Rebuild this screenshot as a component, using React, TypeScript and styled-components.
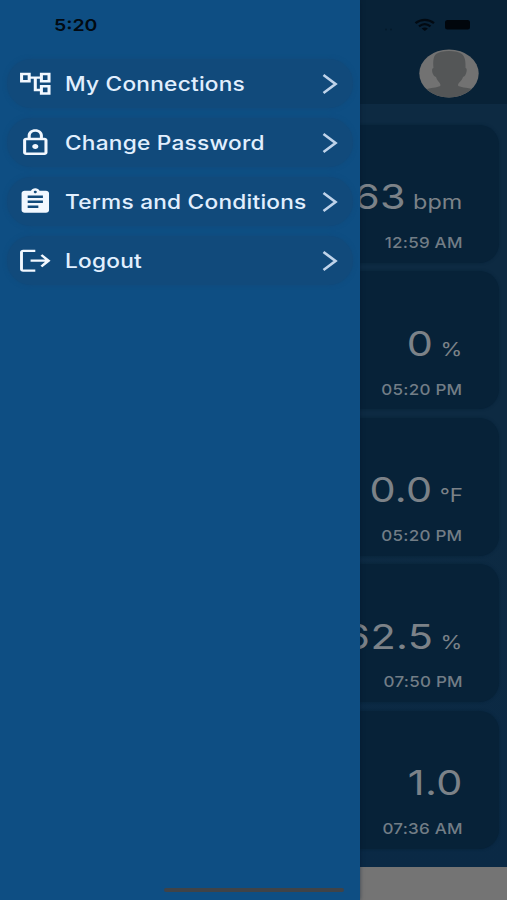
import React from "react";
import styled, { createGlobalStyle } from "styled-components";

const GlobalStyle = createGlobalStyle`
  body { margin: 0; background: #0c2a43; }
  * { box-sizing: border-box; }
`;

const Screen = styled.div`
  position: relative;
  width: 507px;
  height: 900px;
  overflow: hidden;
  font-family: Inter, "Liberation Sans", sans-serif;
`;

const Dashboard = styled.main`
  display: flex;
  flex-direction: column;
  height: 900px;
  background: linear-gradient(#0d2a42 0, #0d2a42 520px, #0a2945 867px);
`;

const Header = styled.header`
  display: flex;
  justify-content: flex-end;
  height: 104px;
  padding: 49px 28px 0 0;
  background: #082237;
`;

const Avatar = styled.svg`
  width: 60px;
  height: 49px;
`;

const CardList = styled.section`
  flex: 1;
  display: flex;
  flex-direction: column;
  gap: 8.4px;
  padding: 21px 8px 0;
`;

const Card = styled.article`
  display: flex;
  flex-direction: column;
  align-items: flex-end;
  height: 138px;
  padding: 48.4px 36.5px 0 0;
  border-radius: 20px;
  background: #072238;
  box-shadow: 0 0 3px #072238;
`;

const Reading = styled.div`
  display: flex;
  align-items: baseline;
  height: 48px;
  line-height: 48px;
  color: #7c8288;
  white-space: nowrap;
  transform: scaleX(1.2);
  transform-origin: right;
`;

const Value = styled.span`
  font-size: 34.5px;
  letter-spacing: 0.3px;
`;

const Unit = styled.span<{ $size: number }>`
  margin-left: 6px;
  font-size: ${(p) => p.$size}px;
  letter-spacing: 0;
`;

const Time = styled.time`
  margin-top: 11.8px;
  font-size: 15px;
  font-weight: 450;
  line-height: 20px;
  letter-spacing: 0.2px;
  color: #727d86;
  white-space: nowrap;
  transform: scaleX(1.135);
  transform-origin: right;
`;

const BottomBar = styled.footer`
  height: 33px;
  background: #747474;
`;

const Drawer = styled.aside`
  position: absolute;
  top: 0;
  left: 0;
  width: 360px;
  height: 900px;
  padding: 59px 7px 0;
  background: #0e4e83;
  box-shadow: 0 0 4px rgba(0, 20, 40, 0.55);
`;

const Menu = styled.nav`
  display: flex;
  flex-direction: column;
  gap: 10px;
`;

const MenuRow = styled.a`
  display: flex;
  align-items: center;
  height: 49px;
  padding: 0 15px 0 10px;
  border-radius: 24px;
  background: #114a7b;
  box-shadow: 0 0 4px #114a7b;
`;

const Icon = styled.svg`
  flex: none;
  width: 36.6px;
  height: 29.5px;
  fill: #f2f8ff;
`;

const Label = styled.span`
  flex: 1;
  margin-left: 11.4px;
  font-size: 19.5px;
  font-weight: 450;
  line-height: 26px;
  letter-spacing: 0.2px;
  color: #e1effe;
  white-space: nowrap;
  transform: scaleX(1.162);
  transform-origin: left;
`;

const Chevron = styled.svg`
  flex: none;
  width: 16px;
  height: 22px;
  fill: none;
  stroke: #bfd3ea;
  stroke-width: 2.7;
`;

const StatusBar = styled.div`
  position: absolute;
  top: 14px;
  left: 0;
  display: flex;
  align-items: center;
  justify-content: space-between;
  width: 507px;
  height: 21px;
  padding: 0 36px 0 54px;
  color: #020a12;
`;

const Clock = styled.span`
  font-size: 16.5px;
  font-weight: 600;
  transform: scaleX(1.18);
  transform-origin: left;
`;

const StatusIcons = styled.svg`
  width: 88px;
  height: 16px;
`;

const HomeIndicator = styled.div`
  position: absolute;
  left: 164px;
  top: 888px;
  width: 180px;
  height: 4px;
  border-radius: 2px;
  background: #404347;
`;

const icons = {
  tree: (
    <path d="M22 11V3h-7v3H9V3H2v8h7V8h2v10h4v3h7v-8h-7v3h-2V8h2v3h7zM7 9H4V5h3v4zm10 6h3v4h-3v-4zm0-10h3v4h-3V5z" />
  ),
  lock: (
    <path
      fillRule="evenodd"
      d="M18 8h-1V6c0-2.76-2.24-5-5-5S7 3.24 7 6v2H6c-1.1 0-2 .9-2 2v10c0 1.1.9 2 2 2h12c1.100 0 2-.9 2-2V10c0-1.100-.9-2-2-2zM9 6c0-1.660 1.340-3 3-3s3 1.340 3 3v2H9V6zm9 14H6V10h12v10zm-6-3c1.100 0 2-.9 2-2s-.9-2-2-2-2 .9-2 2 .9 2 2 2z"
    />
  ),
  terms: (
    <path d="M19 3h-4.180C14.400 1.840 13.300 1 12 1c-1.300 0-2.400.84-2.820 2H5c-1.100 0-2 .9-2 2v14c0 1.100.9 2 2 2h14c1.100 0 2-.9 2-2V5c0-1.100-.9-2-2-2zm-7 0c.55 0 1 .45 1 1s-.45 1-1 1-1-.45-1-1 .45-1 1-1zm2 14H7v-2h7v2zm3-4H7v-2h10v2zm0-4H7V7h10v2z" />
  ),
  logout: (
    <>
      <path d="M12 3H4c-1.100 0-2 .9-2 2v14c0 1.100.9 2 2 2h8v-1.900H3.900V4.900H12z" />
      <path d="M16.600 6.700 15.400 8l3 3H8.900v1.900h9.500l-3 3.100 1.200 1.300L22 12z" />
    </>
  ),
};

const menu: { label: string; icon: keyof typeof icons }[] = [
  { label: "My Connections", icon: "tree" },
  { label: "Change Password", icon: "lock" },
  { label: "Terms and Conditions", icon: "terms" },
  { label: "Logout", icon: "logout" },
];

const readings = [
  { value: "63", unit: "bpm", size: 19.5, time: "12:59 AM" },
  { value: "0", unit: "%", size: 18.5, time: "05:20 PM" },
  { value: "0.0", unit: "°F", size: 18.5, time: "05:20 PM" },
  { value: "62.5", unit: "%", size: 18.5, time: "07:50 PM" },
  { value: "1.0", unit: "", size: 18.5, time: "07:36 AM" },
];

export default function App() {
  return (
    <Screen>
      <GlobalStyle />
      <Dashboard>
        <Header>
          <Avatar viewBox="0 0 60 49">
            <defs>
              <clipPath id="avatar">
                <ellipse cx="30" cy="24.500" rx="29.700" ry="24" />
              </clipPath>
            </defs>
            <g clipPath="url(#avatar)">
              <rect width="60" height="49" fill="#727272" />
              <path
                fill="#545657"
                d="M30 2c-6 0-10 1-13 3-3 3-3 8-2.500 14-2 0-1.500 4-.5 6 .8 2 1.500 2.500 3 3 1 4 4 5 4.500 8 0 2-4 2-13.500 4v9h45v-9c-9-2-14-2-14-4 .5-3 4-4 5-8 1.500-.5 2-1 2.800-3 1-2 1.500-6-.3-6 .3-7-.5-11-3.500-14-3-2-7-3-13-3z"
              />
            </g>
          </Avatar>
        </Header>
        <CardList>
          {readings.map((r, i) => (
            <Card key={i}>
              <Reading>
                <Value>{r.value}</Value>
                {r.unit && <Unit $size={r.size}>{r.unit}</Unit>}
              </Reading>
              <Time>{r.time}</Time>
            </Card>
          ))}
        </CardList>
        <BottomBar />
      </Dashboard>
      <Drawer>
        <Menu>
          {menu.map((m) => (
            <MenuRow key={m.label}>
              <Icon viewBox="0 0 24 24" preserveAspectRatio="none">
                {icons[m.icon]}
              </Icon>
              <Label>{m.label}</Label>
              <Chevron viewBox="0 0 16 22">
                <path d="M1.500 2 13.500 11 1.500 20" />
              </Chevron>
            </MenuRow>
          ))}
        </Menu>
      </Drawer>
      <StatusBar>
        <Clock>5:20</Clock>
        <StatusIcons viewBox="0 0 88 16">
          <g fill="#061a2a">
            <circle cx="3" cy="12.500" r="1" />
            <circle cx="8" cy="12.500" r="1" />
          </g>
          <g fill="none" stroke="#020a12" strokeWidth="2.300">
            <path d="M32.500 6.200c5.500-4.400 13-4.400 18.500 0" />
            <path d="M36 9.400c3.500-2.800 8-2.800 11.500 0" />
          </g>
          <path fill="#020a12" d="M38.600 11.600c2-1.500 4.300-1.500 6.300 0L41.800 14z" />
          <rect x="62" y="3" width="25" height="9.500" rx="2.500" fill="#01060c" />
        </StatusIcons>
      </StatusBar>
      <HomeIndicator />
    </Screen>
  );
}
